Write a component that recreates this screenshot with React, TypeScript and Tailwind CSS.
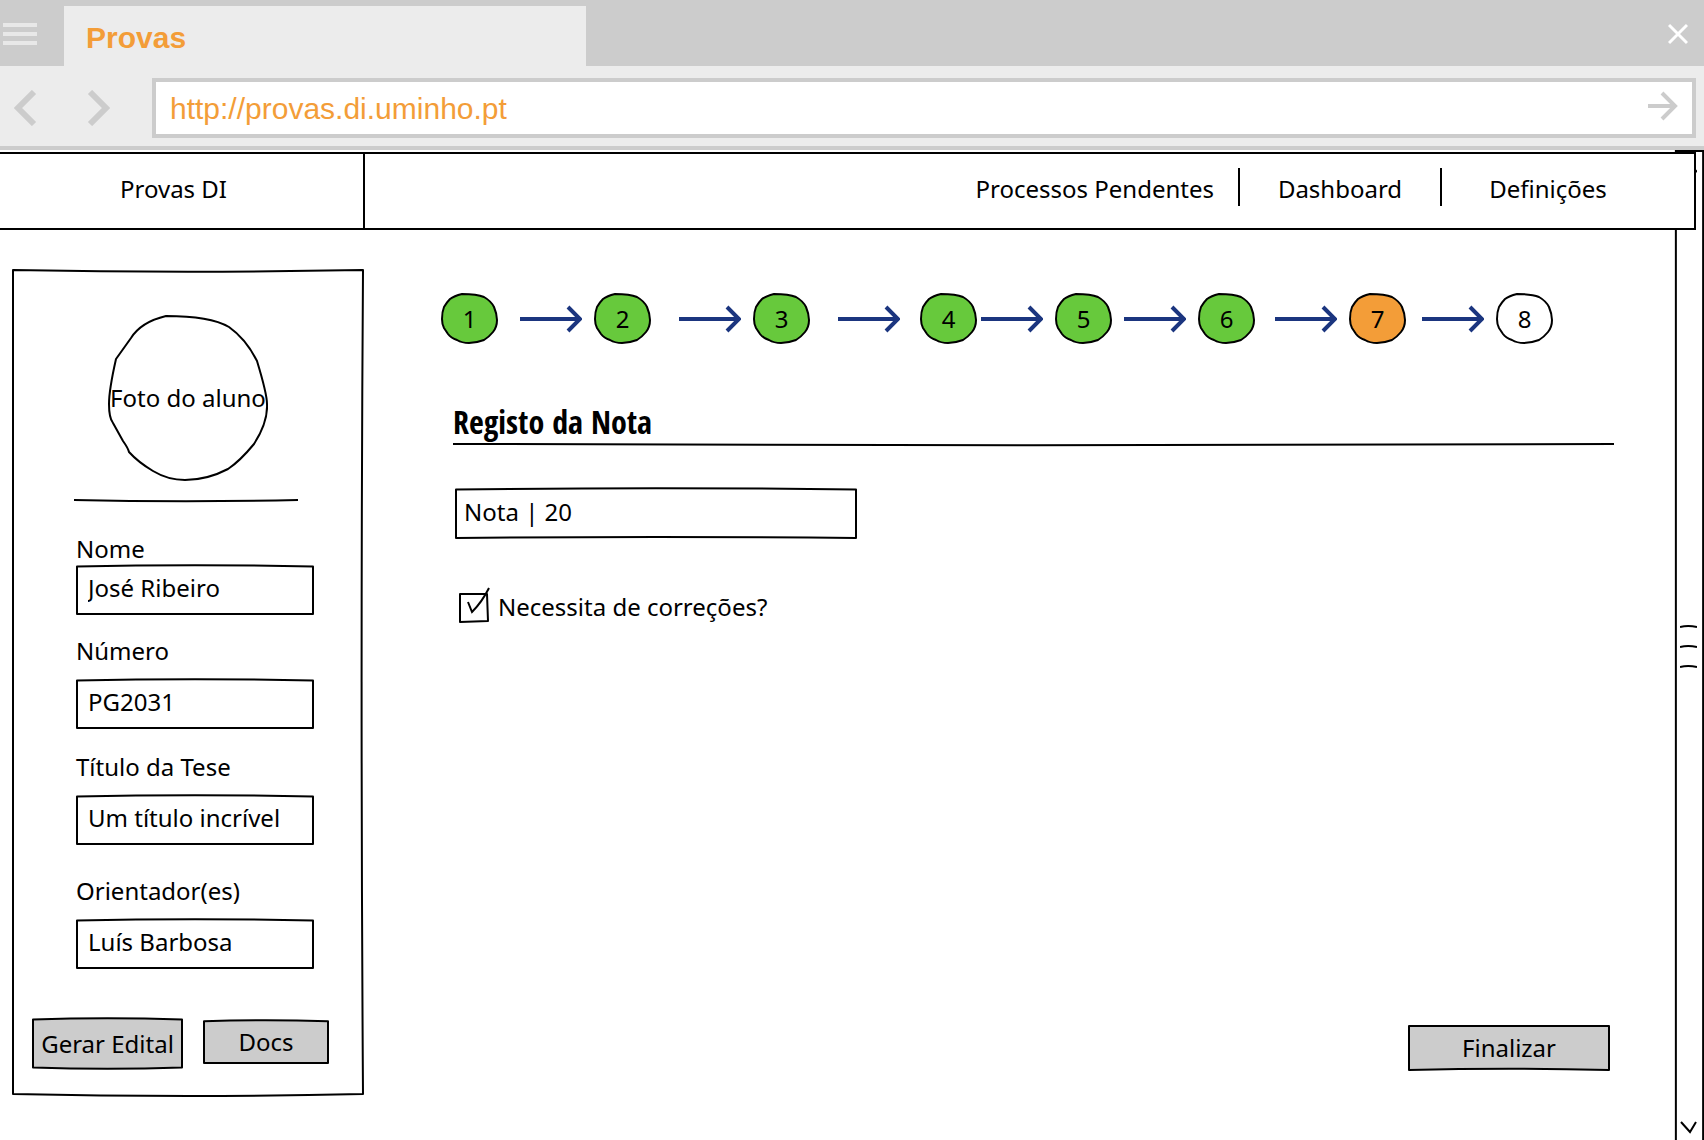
import type { ReactNode } from "react";

const OUTLINES = {
  card: "M0 0 Q50 0.4 100 0 Q99.2 50 100 100 Q50 100.5 0 100 Z",
  raised: "M0 3 Q50 -2 100 3 L100 100 L0 100 Z",
  pinched: "M0 3 Q50 -2 100 3 L100 100 Q50 96 0 100 Z",
  bulged: "M0 3 Q50 -2 100 3 L100 97 Q50 102 0 97 Z",
  flat: "M0 0 L100 0 L100 100 Q50 94 0 100 Z",
};

/* Hand-drawn frame stretched behind whatever it wraps. */
function Sketch({
  shape,
  className,
  fill = "#fff",
  children,
}: {
  shape: keyof typeof OUTLINES;
  className: string;
  fill?: string;
  children: ReactNode;
}) {
  return (
    <div className={`relative ${className}`}>
      <svg
        aria-hidden="true"
        className="absolute inset-px h-[calc(100%-2px)] w-[calc(100%-2px)] overflow-visible"
        viewBox="0 0 100 100"
        preserveAspectRatio="none"
      >
        <path
          d={OUTLINES[shape]}
          fill={fill}
          stroke="#000"
          strokeWidth="2"
          strokeLinejoin="round"
          vectorEffect="non-scaling-stroke"
        />
      </svg>
      <div className="relative h-full">{children}</div>
    </div>
  );
}

function Rule({ className }: { className: string }) {
  return (
    <svg
      aria-hidden="true"
      className={`block h-1 overflow-visible ${className}`}
      viewBox="0 0 100 4"
      preserveAspectRatio="none"
    >
      <path
        d="M0 1 Q50 3.5 100 1"
        fill="none"
        stroke="#000"
        strokeWidth="2"
        vectorEffect="non-scaling-stroke"
      />
    </svg>
  );
}

function Field({
  id,
  label,
  value,
  className,
  labelClass,
}: {
  id: string;
  label: string;
  value: string;
  className: string;
  labelClass: string;
}) {
  return (
    <div className={`flex flex-col ${className}`}>
      <label htmlFor={id} className={`leading-7 ${labelClass}`}>
        {label}
      </label>
      <Sketch shape="raised" className="h-[51px]">
        <input
          id={id}
          defaultValue={value}
          className="h-full w-full bg-transparent px-3 pb-1 outline-none"
        />
      </Sketch>
    </div>
  );
}

function StepArrow({ className }: { className: string }) {
  return (
    <svg
      aria-hidden="true"
      className={`h-7 w-[62px] shrink-0 ${className}`}
      viewBox="0 0 62 28"
      fill="none"
      stroke="#1b357f"
      strokeWidth="4"
    >
      <path d="M0 14H60M48 2L60 14L48 26" />
    </svg>
  );
}

const STEPS = [
  { n: 1, fill: "#67c93c", arrow: "ml-[22px] mr-3" },
  { n: 2, fill: "#67c93c", arrow: "ml-7 mr-3" },
  { n: 3, fill: "#67c93c", arrow: "ml-7 mr-5" },
  { n: 4, fill: "#67c93c", arrow: "ml-1 mr-3" },
  { n: 5, fill: "#67c93c", arrow: "ml-3 mr-3" },
  { n: 6, fill: "#67c93c", arrow: "ml-5 mr-3" },
  { n: 7, fill: "#f39d38", arrow: "ml-4 mr-3" },
  { n: 8, fill: "#fff", arrow: "" },
];

function Browser() {
  return (
    <div className="bg-[#ececec] font-['Liberation_Sans',Arial,sans-serif] text-[30px] text-[#f39d38]">
      <div className="flex h-[66px] items-end bg-[#ccc]">
        <button aria-label="Menu" className="flex h-full w-16 items-center pt-[2px] pl-[3px]">
          <svg width="34" height="24" viewBox="0 0 34 24" stroke="#e8e8e8" strokeWidth="4">
            <path d="M0 3H34M0 12H34M0 21H34" />
          </svg>
        </button>
        <div className="flex h-[60px] w-[522px] items-center bg-[#ececec] px-[22px] pt-1 font-bold">
          Provas
        </div>
        <button aria-label="Fechar" className="ml-auto flex h-full items-center pt-[2px] pr-4">
          <svg width="20" height="22" viewBox="0 0 20 22" stroke="#fff" strokeWidth="3">
            <path d="M1 2L19 20M19 2L1 20" />
          </svg>
        </button>
      </div>
      <div className="flex h-[84px] items-center border-b-4 border-[#ccc] pt-1 pr-2">
        <button aria-label="Voltar" className="w-[72px] pl-[14px]">
          <svg width="23" height="36" viewBox="0 0 23 36" fill="none" stroke="#ccc" strokeWidth="6">
            <path d="M20 2L4 18L20 34" />
          </svg>
        </button>
        <button aria-label="Avançar" className="w-20 pl-[15px]">
          <svg width="23" height="36" viewBox="0 0 23 36" fill="none" stroke="#ccc" strokeWidth="6">
            <path d="M3 2L19 18L3 34" />
          </svg>
        </button>
        <div className="flex h-[60px] grow items-center border-4 border-[#ccc] bg-white pr-[14px]">
          <input
            aria-label="Endereço"
            defaultValue="http://provas.di.uminho.pt"
            className="min-w-0 grow bg-transparent px-[14px] pt-[2px] outline-none"
          />
          <button aria-label="Ir" className="pb-1">
            <svg width="30" height="30" viewBox="0 0 30 30" fill="none" stroke="#ccc" strokeWidth="4">
              <path d="M0 15H28M14 2L27 15L14 28" />
            </svg>
          </button>
        </div>
      </div>
    </div>
  );
}

function Header() {
  return (
    <header className="z-10 col-span-2 col-start-1 row-start-1 mt-[2px] mr-2 flex h-[78px] items-center border-y-2 border-r-2 border-black bg-white">
      <a
        href="#inicio"
        className="flex h-full w-[365px] items-center border-r-2 border-black pr-4 pb-1"
      >
        <span className="grow text-center">Provas DI</span>
      </a>
      <nav className="ml-auto flex items-center pr-10 pb-1 text-center">
        <a href="#pendentes" className="pr-6">
          Processos Pendentes
        </a>
        <span className="mb-1 h-[38px] w-[2px] bg-black" />
        <a href="#dashboard" className="w-[200px]">
          Dashboard
        </a>
        <span className="mb-1 h-[38px] w-[2px] bg-black" />
        <a href="#definicoes" className="w-[212px]">
          Definições
        </a>
      </nav>
    </header>
  );
}

function ScrollTrack() {
  return (
    <div className="relative col-start-2 row-span-2 row-start-1 mt-px flex flex-col items-center pr-[3px]">
      <svg
        aria-hidden="true"
        className="absolute inset-0 h-full w-full overflow-visible"
        viewBox="0 0 100 100"
        preserveAspectRatio="none"
        fill="none"
        stroke="#000"
        strokeWidth="2"
      >
        <path d="M3 101V0H97V101" vectorEffect="non-scaling-stroke" />
      </svg>
      <button aria-label="Subir" className="relative h-[22px] pt-[10px]">
        <svg width="17" height="12" viewBox="0 0 17 12" fill="none" stroke="#000" strokeWidth="2">
          <path d="M1 11L8 1L17 11" />
        </svg>
      </button>
      <svg
        aria-hidden="true"
        className="relative mt-[450px]"
        width="17"
        height="46"
        viewBox="0 0 17 46"
        fill="none"
        stroke="#000"
        strokeWidth="2"
      >
        <path d="M0 4Q8 2 17 4M0 24Q8 22 17 24M0 44Q8 42 17 44" />
      </svg>
      <button aria-label="Descer" className="relative mt-auto mb-[6px]">
        <svg width="17" height="13" viewBox="0 0 17 13" fill="none" stroke="#000" strokeWidth="2">
          <path d="M1 1L10 11L16 1" />
        </svg>
      </button>
    </div>
  );
}

function Sidebar() {
  return (
    <Sketch shape="card" className="w-[352px] shrink-0 self-start">
      <div className="flex flex-col pt-[46px] pb-[25px]">
        <div className="relative mx-auto grid h-[166px] w-40 place-items-center">
          <svg
            aria-hidden="true"
            className="absolute inset-0"
            viewBox="0 0 160 166"
            fill="none"
            stroke="#000"
            strokeWidth="2"
            strokeLinejoin="round"
          >
            <path d="M58 1Q102 1 121 12Q138 24 149 46Q159 79 159 89Q160 107 146 129Q132 146 120 154Q99 165 77 165Q60 165 45 156Q30 147 21 137Q20 133 15 126L5 108Q1 103 1 89Q1 75 8 44L23 23Q33 7 58 1Z" />
          </svg>
          <span className="relative whitespace-nowrap">Foto do aluno</span>
        </div>
        <Rule className="mt-[18px] ml-[62px] w-56" />
        <div className="flex flex-col pr-[50px] pl-16">
          <Field id="nome" label="Nome" value="José Ribeiro" className="mt-8" labelClass="mb-px" />
          <Field id="numero" label="Número" value="PG2031" className="mt-[22px]" labelClass="mb-[13px]" />
          <Field
            id="titulo"
            label="Título da Tese"
            value="Um título incrível"
            className="mt-6"
            labelClass="mb-[13px]"
          />
          <Field
            id="orientador"
            label="Orientador(es)"
            value="Luís Barbosa"
            className="mt-8"
            labelClass="mb-[13px]"
          />
        </div>
        <div className="mt-12 flex items-center gap-5 pl-5">
          <Sketch shape="bulged" fill="#ccc" className="h-[53px] w-[151px]">
            <button className="h-full w-full whitespace-nowrap">Gerar Edital</button>
          </Sketch>
          <Sketch shape="raised" fill="#ccc" className="mb-1 h-[45px] w-[126px]">
            <button className="h-full w-full">Docs</button>
          </Sketch>
        </div>
      </div>
    </Sketch>
  );
}

function Main() {
  return (
    <main className="flex grow flex-col pt-6 pr-[61px] pl-[77px]">
      <ol className="flex items-center">
        {STEPS.map((step) => (
          <li key={step.n} className="flex items-center">
            <span className="relative grid h-[51px] w-[57px] place-items-center">
              <svg
                aria-hidden="true"
                className="absolute inset-0 h-full w-full"
                viewBox="0 0 57 51"
                stroke="#000"
                strokeWidth="2"
                strokeLinejoin="round"
              >
                <path
                  d="M21 1Q36 1 43 4Q50 8 53 14Q56 21 56 27Q56 34 52 39Q48 44 43 47Q35 50 28 50Q21 50 16 47Q10 45 7 41L3 35Q1 31 1 26Q1 19 3 14Q6 9 9 6Q13 3 21 1Z"
                  fill={step.fill}
                />
              </svg>
              <span className="relative">{step.n}</span>
            </span>
            {step.arrow && <StepArrow className={step.arrow} />}
          </li>
        ))}
      </ol>
      <h1 className="mt-14 pl-3 font-['Liberation_Sans_Narrow','Open_Sans_Condensed','Noto_Sans',sans-serif] text-[32px] leading-[43px] font-bold">
        Registo da Nota
      </h1>
      <Rule className="ml-3 w-auto" />
      <Sketch shape="pinched" className="mt-10 ml-[14px] h-[52px] w-[402px]">
        <input
          aria-label="Nota"
          defaultValue="Nota | 20"
          className="h-full w-full bg-transparent px-[9px] pb-1 outline-none"
        />
      </Sketch>
      <label className="mt-12 ml-[18px] flex items-center gap-[9px] self-start">
        <span className="relative h-[35px] w-[30px]">
          <input
            type="checkbox"
            defaultChecked
            className="peer absolute inset-0 h-full w-full appearance-none"
          />
          <svg
            aria-hidden="true"
            className="pointer-events-none absolute inset-0"
            viewBox="0 0 30 35"
            fill="none"
            stroke="#000"
            strokeWidth="2"
            strokeLinejoin="round"
          >
            <path d="M1 6L28 6L29 33L1 34Z" />
          </svg>
          <svg
            aria-hidden="true"
            className="pointer-events-none invisible absolute inset-0 overflow-visible peer-checked:visible"
            viewBox="0 0 30 35"
            fill="none"
            stroke="#000"
            strokeWidth="2"
          >
            <path d="M9 14L13 24Q23 14 30 0" />
          </svg>
        </span>
        <span className="pt-1">Necessita de correções?</span>
      </label>
      <Sketch
        shape="flat"
        fill="#ccc"
        className="mt-auto mr-1 mb-[69px] h-[46px] w-[202px] self-end"
      >
        <button className="h-full w-full">Finalizar</button>
      </Sketch>
    </main>
  );
}

export default function App() {
  return (
    <div className="flex min-h-screen flex-col bg-white font-['Noto_Sans',sans-serif] text-2xl text-black">
      <Browser />
      <div className="grid grow grid-cols-[1fr_29px] grid-rows-[auto_1fr]">
        <Header />
        <div className="col-start-1 row-start-2 flex pt-[39px] pl-3">
          <Sidebar />
          <Main />
        </div>
        <ScrollTrack />
      </div>
    </div>
  );
}
